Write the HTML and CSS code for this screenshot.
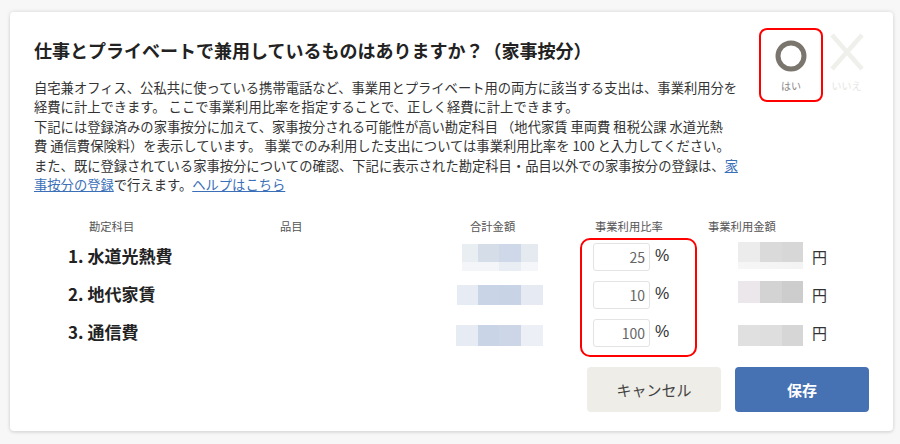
FILE: index.html
```html
<!DOCTYPE html>
<html lang="ja">
<head>
<meta charset="utf-8">
<title>家事按分</title>
<link rel="stylesheet" href="styles.css">
</head>
<body>
<div class="card">
  <div class="head">
    <div class="intro">
      <h1 class="title">仕事とプライベートで兼用しているものはありますか？（家事按分）</h1>
      <p class="desc">自宅兼オフィス、公私共に使っている携帯電話など、事業用とプライベート用の両方に該当する支出は、事業利用分を<br>経費に計上できます。 ここで事業利用比率を指定することで、正しく経費に計上できます。<br>下記には登録済みの家事按分に加えて、家事按分される可能性が高い勘定科目 （地代家賃 車両費 租税公課 水道光熱<br>費 通信費保険料）を表示しています。 事業でのみ利用した支出については事業利用比率を 100 と入力してください。<br>また、既に登録されている家事按分についての確認、下記に表示された勘定科目・品目以外での家事按分の登録は、<a href="#">家<br>事按分の登録</a>で行えます。<a href="#">ヘルプはこちら</a></p>
    </div>
    <div class="toggles">
      <div class="opt opt-yes">
        <svg class="ico-yes" width="32" height="32" viewBox="0 0 32 32"><circle cx="16" cy="16" r="13" fill="none" stroke="#7a766e" stroke-width="5"/></svg>
        <span class="opt-label">はい</span>
      </div>
      <div class="opt opt-no">
        <svg class="ico-no" width="36" height="40" viewBox="0 0 36 40"><path d="M3 3 L33 37 M33 3 L3 37" stroke="#efefeb" stroke-width="4.5" fill="none"/></svg>
        <span class="opt-label">いいえ</span>
      </div>
    </div>
  </div>

  <div class="table">
    <div class="th th1">勘定科目</div>
    <div class="th th2">品目</div>
    <div class="th th3">合計金額</div>
    <div class="th th4">事業利用比率</div>
    <div class="th th5">事業利用金額</div>

    <div class="td name">1. 水道光熱費</div>
    <div class="td"></div>
    <div class="td"><div class="blur t1"></div></div>
    <div class="td rate"><input class="num" type="text" value="25"><span class="pct">%</span></div>
    <div class="td amt"><div class="blur a1"></div><span class="yen">円</span></div>

    <div class="td name">2. 地代家賃</div>
    <div class="td"></div>
    <div class="td"><div class="blur t2"></div></div>
    <div class="td rate"><input class="num" type="text" value="10"><span class="pct">%</span></div>
    <div class="td amt"><div class="blur a2"></div><span class="yen">円</span></div>

    <div class="td name">3. 通信費</div>
    <div class="td"></div>
    <div class="td"><div class="blur t3"></div></div>
    <div class="td rate"><input class="num" type="text" value="100"><span class="pct">%</span></div>
    <div class="td amt"><div class="blur a3"></div><span class="yen">円</span></div>

    <div class="mark"></div>
  </div>

  <div class="actions">
    <button class="btn btn-cancel" type="button">キャンセル</button>
    <button class="btn btn-save" type="button">保存</button>
  </div>
</div>
</body>
</html>
```

FILE: styles.css
```css
* { box-sizing: border-box; }
html, body { margin: 0; padding: 0; }
body {
  background: #f7f7f7;
  font-family: "Noto Sans CJK JP", "Noto Sans", sans-serif;
  color: #333;
  width: 900px;
  height: 444px;
  overflow: hidden;
}
.card {
  margin: 12px 0 0 10px;
  width: 883px;
  height: 419px;
  background: #fff;
  border-radius: 4px;
  box-shadow: 0 0 4px rgba(0,0,0,0.14), 0 2px 3px rgba(0,0,0,0.06);
  padding: 16px 24px 19px 24px;
  display: flex;
  flex-direction: column;
}
.head {
  display: flex;
  justify-content: space-between;
  align-items: flex-start;
}
.title {
  margin: 10px 0 0 0;
  font-size: 18px;
  line-height: 24px;
  font-weight: bold;
  color: #222;
  white-space: nowrap;
}
.desc {
  margin: 16px 0 0 0;
  font-size: 13.3px;
  line-height: 19.4px;
  color: #333;
  white-space: nowrap;
}
.desc a { color: #3b6fb8; text-decoration: underline; }

.toggles { display: flex; gap: 1px; }
.opt {
  display: flex;
  flex-direction: column;
  align-items: center;
  border: 2px solid transparent;
  border-radius: 8px;
  height: 74px;
}
.opt-yes { width: 64px; border-color: #ff0000; padding-top: 10px; }
.opt-no { width: 45px; padding-top: 2px; }
.ico-yes, .ico-no { display: block; }
.opt-label { font-size: 10px; line-height: 14px; margin-top: 7px; }
.opt-yes .opt-label { color: #888; }
.opt-no .opt-label { color: #e6e6e2; }

.table {
  position: relative;
  margin-top: 19px;
  display: grid;
  grid-template-columns: 236px 180px 140px 110px 169px;
  grid-template-rows: 25px 38px 38px 38px;
}
.th {
  font-size: 11.3px;
  color: #555;
  display: flex;
  align-items: center;
}
.th1 { padding-left: 55px; }
.th2 { padding-left: 10px; }
.th3 { padding-left: 20px; }
.th4 { padding-left: 5px; }
.th5 { padding-left: 8px; }
.td { display: flex; align-items: center; }
.name {
  padding-left: 34px;
  padding-bottom: 4px;
  font-size: 17px;
  font-weight: bold;
  color: #222;
}
.rate { padding-left: 3px; }
.num {
  width: 57px;
  height: 28px;
  border: 1px solid #e3e3e3;
  border-radius: 3px;
  text-align: right;
  padding: 0 4px 0 0;
  font-family: "Noto Sans CJK JP", sans-serif;
  font-size: 14px;
  color: #666;
  background: #fff;
  outline: none;
}
.pct { margin-left: 5px; font-size: 16px; color: #333; font-family: "Liberation Sans", sans-serif; padding-bottom: 2px; }
.amt { padding-left: 38px; }
.yen { margin-left: 9px; font-size: 15px; color: #333; padding-bottom: 2px; }

.blur { flex: none; }
.t1 {
  margin-left: 12px; width: 76px; height: 27px;
  background:
    linear-gradient(to right, #e9eef2 0 16px, #d5dde9 16px 37px, #cfd8e8 37px 59px, #e5e9f0 59px) top / 100% 18px no-repeat,
    linear-gradient(to right, #f3f5f8 0 37px, #e9eef4 37px 59px, #f5f6f9 59px) bottom / 100% 9px no-repeat;
}
.t2 {
  margin-left: 7px; width: 86px; height: 20px;
  background: linear-gradient(to right, #e6ebf4 0 21px, #c9d5e6 21px 42px, #c8d3e5 42px 64px, #e6ebf3 64px);
}
.t3 {
  margin-left: 6px; width: 87px; height: 21px; transform: translateY(2px);
  background: linear-gradient(to right, #e6ebf4 0 22px, #c9d4e6 22px 43px, #ccd6e7 43px 65px, #eceff6 65px);
}
.a1 {
  width: 65px; height: 27px; transform: translateY(-2px);
  background:
    linear-gradient(to right, #ececec 0 22px, #dadada 22px 44px, #d7d7d7 44px) top / 100% 20px no-repeat,
    linear-gradient(to right, #f6f6f6, #f3f3f3) bottom / 100% 7px no-repeat;
}
.a2 {
  width: 65px; height: 22px; transform: translateY(-3px);
  background: linear-gradient(to right, #ebe7ea 0 22px, #d3d3d3 22px 44px, #cdcdcd 44px);
}
.a3 {
  width: 65px; height: 21px; transform: translateY(2px);
  background: linear-gradient(to right, #e0e0e0 0 22px, #dedede 22px 44px, #d6d6d6 44px);
}

.mark {
  position: absolute;
  left: 546px;
  top: 25px;
  width: 117px;
  height: 119px;
  border: 2px solid #ff0000;
  border-radius: 10px;
  pointer-events: none;
}

.actions {
  margin-top: 15px;
  display: flex;
  justify-content: flex-end;
  gap: 14px;
}
.btn {
  width: 134px;
  height: 45px;
  border: none;
  border-radius: 4px;
  font-family: "Noto Sans CJK JP", sans-serif;
  font-size: 15px;
}
.btn-cancel { background: #efede7; color: #444; }
.btn-save { background: #4672b4; color: #fff; font-weight: bold; }
```
